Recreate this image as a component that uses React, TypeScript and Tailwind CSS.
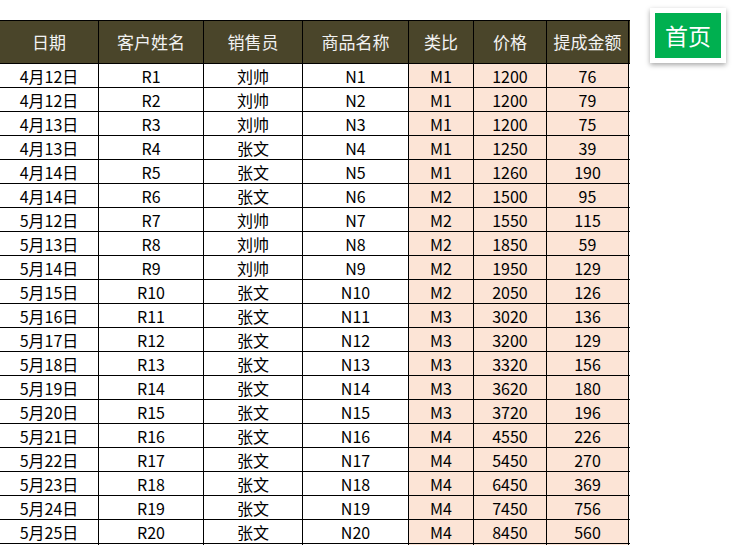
import React from "react";

const rows: string[][] = [
  ["4月12日", "R1", "刘帅", "N1", "M1", "1200", "76"],
  ["4月12日", "R2", "刘帅", "N2", "M1", "1200", "79"],
  ["4月13日", "R3", "刘帅", "N3", "M1", "1200", "75"],
  ["4月13日", "R4", "张文", "N4", "M1", "1250", "39"],
  ["4月14日", "R5", "张文", "N5", "M1", "1260", "190"],
  ["4月14日", "R6", "张文", "N6", "M2", "1500", "95"],
  ["5月12日", "R7", "刘帅", "N7", "M2", "1550", "115"],
  ["5月13日", "R8", "刘帅", "N8", "M2", "1850", "59"],
  ["5月14日", "R9", "刘帅", "N9", "M2", "1950", "129"],
  ["5月15日", "R10", "张文", "N10", "M2", "2050", "126"],
  ["5月16日", "R11", "张文", "N11", "M3", "3020", "136"],
  ["5月17日", "R12", "张文", "N12", "M3", "3200", "129"],
  ["5月18日", "R13", "张文", "N13", "M3", "3320", "156"],
  ["5月19日", "R14", "张文", "N14", "M3", "3620", "180"],
  ["5月20日", "R15", "张文", "N15", "M3", "3720", "196"],
  ["5月21日", "R16", "张文", "N16", "M4", "4550", "226"],
  ["5月22日", "R17", "张文", "N17", "M4", "5450", "270"],
  ["5月23日", "R18", "张文", "N18", "M4", "6450", "369"],
  ["5月24日", "R19", "张文", "N19", "M4", "7450", "756"],
  ["5月25日", "R20", "张文", "N20", "M4", "8450", "560"],
  ["", "", "", "", "", "", ""],
];

const headers = ["日期", "客户姓名", "销售员", "商品名称", "类比", "价格", "提成金额"];
const widths = ["w-[99px]", "w-[105px]", "w-[99px]", "w-[106px]", "w-[65px]", "w-[73px]", "w-[82px]"];

export default function App() {
  return (
    <div
      className="relative h-[545px] w-[753px] overflow-hidden bg-white"
      style={{ fontFamily: '"Noto Sans CJK SC", "Noto Sans", sans-serif' }}
    >
      <div className="mt-[20px] flex w-[630px] flex-col">
        <div className="flex h-[44px] border-y border-black bg-[#4a452a]">
          {headers.map((h, i) => (
            <div
              key={i}
              className={`${widths[i]} flex shrink-0 items-center justify-center border-r border-black text-[17px] text-[#f2f2f2]`}
            >
              {h}
            </div>
          ))}
        </div>
        {rows.map((r, ri) => (
          <div key={ri} className="flex h-[24px] border-b border-black">
            {r.map((c, ci) => (
              <div
                key={ci}
                className={`${widths[ci]} flex shrink-0 items-center justify-center border-r border-black text-[16px] leading-none text-black ${
                  ci >= 4 ? "bg-[#fce4d6]" : "bg-white"
                }`}
              >
                {c}
              </div>
            ))}
          </div>
        ))}
      </div>
      <div className="absolute left-[650px] top-[8px] flex h-[55px] w-[76px] items-center justify-center bg-white shadow-[0_2px_5px_rgba(0,0,0,0.35)]">
        <div className="flex h-[45px] w-[66px] items-center justify-center bg-[#00b050] text-[23px] text-white">
          首页
        </div>
      </div>
    </div>
  );
}
